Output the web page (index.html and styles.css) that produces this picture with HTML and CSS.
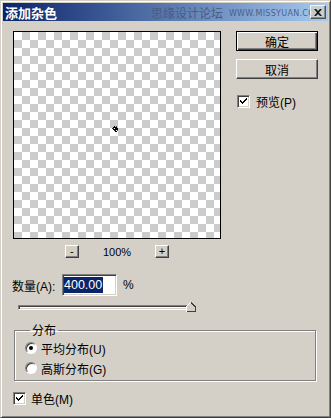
FILE: index.html
```html
<!DOCTYPE html>
<html lang="zh-CN">
<head>
    <meta charset="UTF-8">
    <title>添加杂色</title>
    <link rel="stylesheet" href="styles.css">
</head>
<body>

    <div class="window">

        <!-- Title bar -->
        <div class="titlebar">
            <span class="title">添加杂色</span>
            <span class="watermark">思缘设计论坛</span>
            <span class="watermark-url">WWW.MISSYUAN.COM</span>
            <span class="close-btn">
                <svg width="8" height="7" viewBox="0 0 8 7">
                    <path d="M0 0h2l2 2 2-2h2L5 3.5 8 7H6L4 5 2 7H0l3-3.5z" fill="#000"/>
                </svg>
            </span>
        </div>

        <div class="client">
            <div class="top">
                <div class="preview-col">
                    <div class="preview">
                        <svg class="noise" width="7" height="7" viewBox="0 0 7 7" shape-rendering="crispEdges">
                            <rect x="2" y="0" width="1" height="1" fill="#000"/>
                            <rect x="4" y="0" width="1" height="1" fill="#555"/>
                            <rect x="1" y="1" width="4" height="1" fill="#000"/>
                            <rect x="0" y="2" width="2" height="1" fill="#333"/>
                            <rect x="3" y="2" width="3" height="1" fill="#000"/>
                            <rect x="1" y="3" width="5" height="1" fill="#000"/>
                            <rect x="2" y="4" width="2" height="1" fill="#222"/>
                            <rect x="5" y="4" width="1" height="1" fill="#666"/>
                            <rect x="3" y="5" width="2" height="1" fill="#000"/>
                        </svg>
                    </div>
                    <div class="zoom-row">
                        <span class="mini-btn">-</span>
                        <span class="zoom-value">100%</span>
                        <span class="mini-btn">+</span>
                    </div>
                </div>

                <div class="side-col">
                    <div class="btn btn-default">确定</div>
                    <div class="btn">取消</div>
                    <div class="check-row preview-check">
                        <span class="checkbox">
                            <svg width="9" height="9" viewBox="0 0 9 9" shape-rendering="crispEdges">
                                <path d="M1 3h1v1h1v1h1V4h1V3h1V2h1V1h1v2H7v1H6v1H5v1H4v1H3V6H2V5H1z" fill="#000"/>
                            </svg>
                        </span>
                        <span>预览(P)</span>
                    </div>
                </div>
            </div>

            <div class="amount-row">
                <span class="amount-label">数量(A):</span>
                <span class="textbox"><span class="selected">400.00</span></span>
                <span class="unit">%</span>
            </div>

            <div class="slider">
                <div class="track"></div>
                <svg class="thumb" width="10" height="10" viewBox="0 0 10 10" shape-rendering="crispEdges">
                    <path d="M0.5 9.5V4.5L4.5 0.5h1L9.5 4.5v5z" fill="#d4d0c8"/>
                    <path d="M0.5 9.5V4.5L4.5 0.5h0.5" stroke="#fff" fill="none"/>
                    <path d="M5 0.5L9.5 5v4.5h-9" stroke="#404040" fill="none"/>
                </svg>
            </div>

            <fieldset class="group">
                <legend>分布</legend>
                <div class="radio-row">
                    <span class="radio checked"></span>
                    <span>平均分布(U)</span>
                </div>
                <div class="radio-row">
                    <span class="radio"></span>
                    <span>高斯分布(G)</span>
                </div>
            </fieldset>

            <div class="check-row mono-check">
                <span class="checkbox">
                    <svg width="9" height="9" viewBox="0 0 9 9" shape-rendering="crispEdges">
                        <path d="M1 3h1v1h1v1h1V4h1V3h1V2h1V1h1v2H7v1H6v1H5v1H4v1H3V6H2V5H1z" fill="#000"/>
                    </svg>
                </span>
                <span>单色(M)</span>
            </div>
        </div>
    </div>

</body>
</html>
```

FILE: styles.css
```css
body {
    margin: 0;
    padding: 0;
    font-family: 'Liberation Sans', 'Noto Sans CJK SC', sans-serif;
    font-size: 12px;
    color: #000;
}

/* Window frame */
.window {
    width: 331px;
    height: 418px;
    box-sizing: border-box;
    background: #d4d0c8;
    border: 1px solid;
    border-color: #d4d0c8 #404040 #404040 #d4d0c8;
    box-shadow: inset 1px 1px #fff, inset -1px -1px #808080;
    padding: 2px;
    display: flex;
    flex-direction: column;
}

/* Title bar */
.titlebar {
    position: relative;
    height: 18px;
    display: flex;
    align-items: center;
    padding: 0 6px 0 2px;
    background: linear-gradient(to right, #0a246a, #a6caf0);
}

.title {
    color: #fff;
    font-weight: bold;
    font-size: 13px;
    font-family: 'Noto Sans CJK SC', sans-serif;
}

.watermark {
    margin-left: auto;
    color: #4a5b84;
    font-size: 12px;
    font-family: 'Noto Sans CJK SC', sans-serif;
}

.watermark-url {
    margin-left: 6px;
    color: #4c5f8a;
    font-size: 8px;
    font-family: 'DejaVu Sans', sans-serif;
    letter-spacing: 0.3px;
    padding-top: 3px;
}

.close-btn {
    position: absolute;
    right: 2px;
    top: 2px;
    width: 16px;
    height: 14px;
    box-sizing: border-box;
    background: #d4d0c8;
    border: 1px solid;
    border-color: #fff #404040 #404040 #fff;
    box-shadow: inset -1px -1px #808080;
    display: flex;
    align-items: center;
    justify-content: center;
    opacity: 0.85;
}

/* Client area */
.client {
    padding: 10px 0 0 10px;
}

.top {
    display: flex;
    gap: 15px;
}

.preview {
    position: relative;
    width: 208px;
    height: 208px;
    box-sizing: border-box;
    border: 1px solid #000;
    background: repeating-conic-gradient(#cccccc 0 25%, #fff 0 50%) 0 0 / 16px 16px;
}

.noise {
    position: absolute;
    left: 98px;
    top: 94px;
}

.zoom-row {
    margin-top: 6px;
    display: flex;
    justify-content: center;
    align-items: center;
    gap: 24px;
    height: 13px;
}

.mini-btn {
    width: 14px;
    height: 13px;
    box-sizing: border-box;
    background: #d4d0c8;
    border: 1px solid;
    border-color: #fff #404040 #404040 #fff;
    box-shadow: inset -1px -1px #808080;
    display: flex;
    align-items: center;
    justify-content: center;
    font-size: 11px;
    line-height: 1;
}

.zoom-value {
    font-size: 11px;
}

/* Right column */
.side-col {
    width: 82px;
    display: flex;
    flex-direction: column;
}

.btn {
    height: 20px;
    box-sizing: border-box;
    background: #d4d0c8;
    border: 1px solid;
    border-color: #fff #404040 #404040 #fff;
    box-shadow: inset -1px -1px #808080;
    display: flex;
    align-items: center;
    justify-content: center;
    font-family: 'Noto Sans CJK SC', sans-serif;
    margin-bottom: 8px;
}

.btn-default {
    border: 1px solid #000;
    box-shadow: inset 1px 1px #fff, inset -1px -1px #404040, inset -2px -2px #808080;
}

.check-row {
    display: flex;
    align-items: center;
    gap: 6px;
    height: 16px;
}

.preview-check {
    margin-top: 6px;
    margin-left: 1px;
}

.checkbox {
    width: 13px;
    height: 13px;
    box-sizing: border-box;
    background: #fff;
    border: 1px solid;
    border-color: #808080 #fff #fff #808080;
    box-shadow: inset 1px 1px #404040, inset -1px -1px #d4d0c8;
    display: flex;
    align-items: center;
    justify-content: center;
    flex-shrink: 0;
}

/* Amount */
.amount-row {
    margin-top: 16px;
    display: flex;
    align-items: center;
    height: 22px;
}

.amount-label {
    width: 50px;
    margin-left: -1px;
}

.textbox {
    width: 55px;
    height: 22px;
    box-sizing: border-box;
    background: #fff;
    border: 1px solid;
    border-color: #808080 #fff #fff #808080;
    box-shadow: inset 1px 1px #404040, inset -1px -1px #d4d0c8;
    padding: 2px 0 2px 1px;
    display: flex;
}

.selected {
    background: #0a246a;
    color: #fff;
    font-size: 12.5px;
    line-height: 16px;
    padding-right: 1px;
}

.unit {
    margin-left: 6px;
}

/* Slider */
.slider {
    position: relative;
    margin-top: 6px;
    margin-left: 5px;
    width: 178px;
    height: 10px;
}

.track {
    position: absolute;
    left: 0;
    right: 0;
    top: 3px;
    height: 5px;
    box-sizing: border-box;
    background: #fff;
    border: 1px solid;
    border-color: #808080 #fff #fff #808080;
    box-shadow: inset 1px 1px #404040, inset -1px -1px #d4d0c8;
}

.thumb {
    position: absolute;
    right: 0;
    top: 0;
}

/* Group box */
.group {
    margin: 11px 0 0 1px;
    width: 302px;
    box-sizing: border-box;
    border: 1px solid #808080;
    box-shadow: inset 1px 1px #fff, 1px 1px #fff;
    padding: 0 0 2px 10px;
}

.group legend {
    margin-left: 5px;
    padding: 0 2px;
    line-height: 14px;
    font-family: 'Noto Sans CJK SC', sans-serif;
}

.radio-row {
    display: flex;
    align-items: center;
    gap: 4px;
    height: 20px;
}

.radio-row:first-of-type {
    margin-top: 1px;
}

.radio {
    position: relative;
    width: 12px;
    height: 12px;
    box-sizing: border-box;
    border-radius: 50%;
    background: #fff;
    border: 1px solid;
    border-color: #808080 #fff #fff #808080;
    box-shadow: inset 1px 1px #404040;
}

.radio.checked::after {
    content: '';
    position: absolute;
    left: 3px;
    top: 3px;
    width: 4px;
    height: 4px;
    border-radius: 50%;
    background: #000;
}

.mono-check {
    margin-top: 9px;
    gap: 5px;
}
```
